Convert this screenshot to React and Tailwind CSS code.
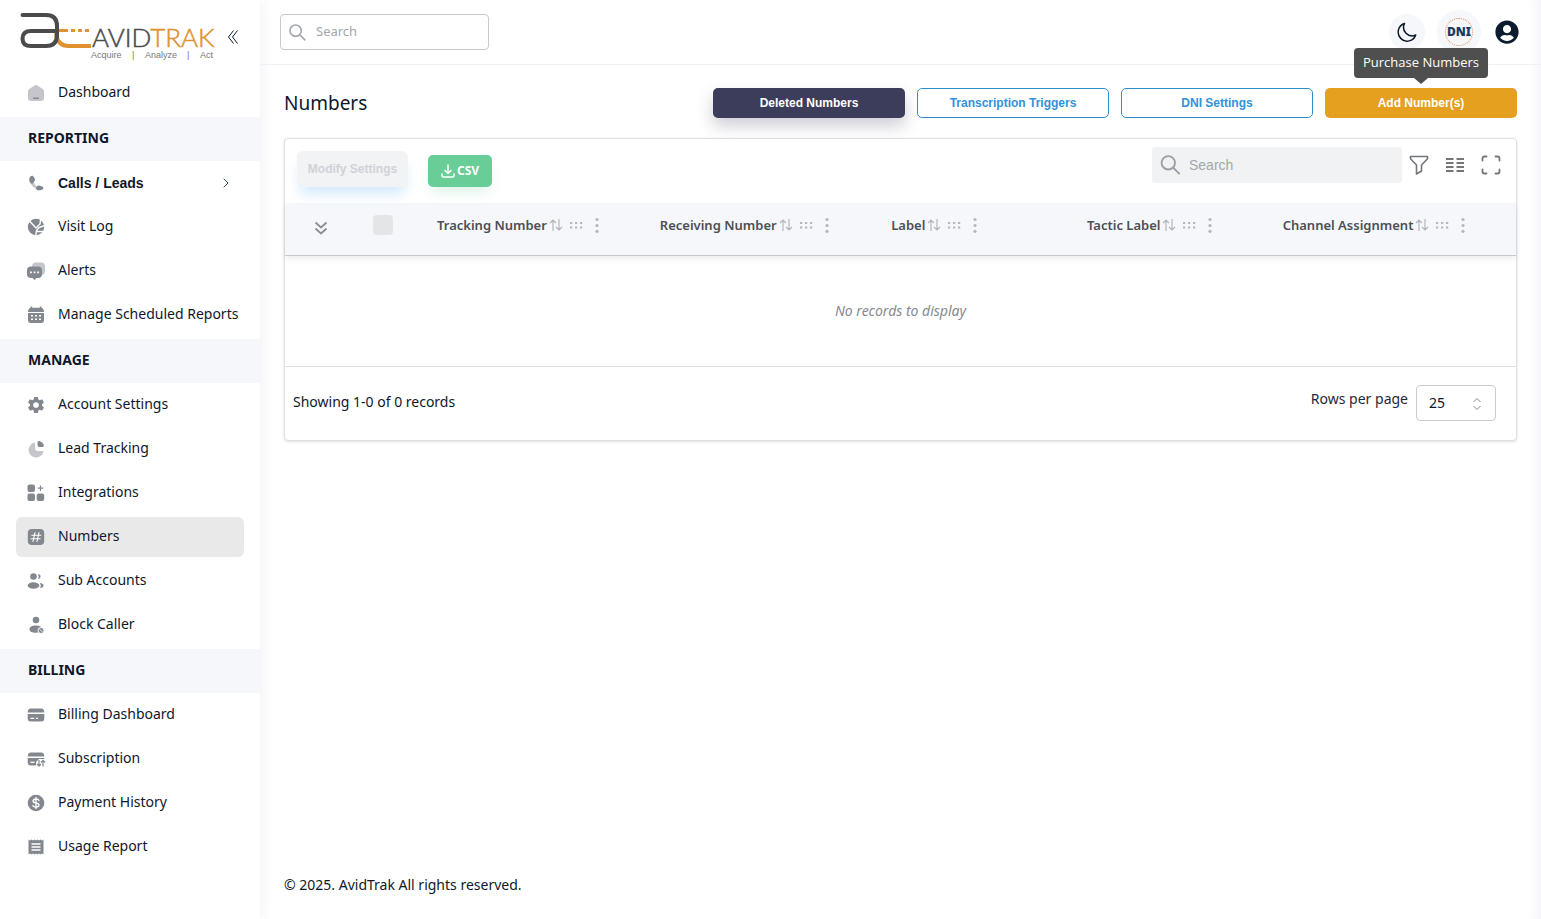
import { useState } from 'react';
import { FaUserCircle } from 'react-icons/fa';
import { IoSettingsSharp } from 'react-icons/io5';
import { ChevronRight } from 'lucide-react';

const Icon = ({ children }) => (
  <svg viewBox="0 0 20 20" className="w-5 h-5 shrink-0" fill="#83888e" aria-hidden="true">
    {children}
  </svg>
);

const icons = {
  dashboard: (
    <Icon>
      <path fill="#c4c6cb" d="M9 2.3 3.3 6.1Q2 7 2 8.6V15a3 3 0 0 0 3 3h10a3 3 0 0 0 3-3V8.6q0-1.6-1.300-2.500L11 2.300q-1-.6-2 0Z" />
      <rect x="7" y="14.500" width="6" height="1.500" rx=".7" />
    </Icon>
  ),
  calls: (
    <Icon>
      <path fill="#c4c6cb" d="m7 8 2.500 4.500L13 14.500l-1.500 2Q5.500 14 4 8.500Z" />
      <path d="M3.300 5.500C3.800 3 6 2.300 7.200 3.300c1.700 1.500 2.300 3.700 1.200 5.200L6 11Q2.700 9 3.300 5.500ZM11 17q-1.800-1-.5-3 1.500-1.700 3.700-1.300 3.300.8 3.300 2.300t-2.300 2q-2.200.4-4.200 0Z" />
    </Icon>
  ),
  visit: (
    <Icon>
      <circle cx="10" cy="10" r="8.200" />
      <path d="M3 3.500 10 11l4-4 .5-4M18.500 8.500 13 10.500l-2.500 3-.8 6M11 14.500l6 0" fill="none" stroke="#fff" strokeWidth="1.400" />
    </Icon>
  ),
  alerts: (
    <Icon>
      <rect x="6" y="1.500" width="13" height="12.500" rx="4" fill="#c4c6cb" />
      <path d="M5 5.500h7a4 4 0 0 1 4 4V13a4 4 0 0 1-4 4h-1.500L8.500 19 6.500 17H5a4 4 0 0 1-4-4V9.500a4 4 0 0 1 4-4Z" />
      <path d="M4 10.500h1.800v1.800H4zM7.600 10.500h1.800v1.800H7.600zM11.200 10.500H13v1.800h-1.800z" fill="#fff" />
    </Icon>
  ),
  calendar: (
    <Icon>
      <path d="M4.500 1.500h1.700v1.300h7.600V1.500h1.700v1.400q2.500.3 2.500 4.100H2q0-3.800 2.500-4.100ZM2 8h16v7a3 3 0 0 1-3 3H5a3 3 0 0 1-3-3Z" />
      <path d="M5 10.800h2M9 10.800h2M13 10.800h2M5 14.200h2M9 14.200h2M13 14.200h2" stroke="#fff" strokeWidth="1.600" />
    </Icon>
  ),
  settings: <IoSettingsSharp className="w-5 h-5 p-px shrink-0 text-[#83888e]" />,
  pie: (
    <Icon>
      <path fill="#c4c6cb" d="M9 3.500A7.500 7.500 0 1 0 17.500 12H12q-3 0-3-3Z" />
      <path d="M11.500 3.500q0-2 2-1.500 3.300 1 4.300 4 .5 2-1.300 2h-3q-2 0-2-2Z" />
    </Icon>
  ),
  integrations: (
    <Icon>
      <rect x="1.500" y="1.500" width="7.500" height="7.500" rx="2" />
      <rect x="1.500" y="10.500" width="7.500" height="7.500" rx="2" />
      <rect x="10.700" y="10.500" width="7.500" height="7.500" rx="2" />
      <path d="M14.500 2.500v5.500M11.700 5.200h5.600" stroke="#83888e" strokeWidth="1.200" />
    </Icon>
  ),
  hash: (
    <Icon>
      <rect x="1.800" y="2" width="16.400" height="16" rx="4" />
      <path d="M9 5.500 7 14.500M13 5.500l-2 9M5.800 8.200h9M5.200 11.800h9" stroke="#fff" strokeWidth="1.100" strokeLinecap="round" />
    </Icon>
  ),
  users: (
    <Icon>
      <circle cx="7.500" cy="5.500" r="3.300" />
      <ellipse cx="7.500" cy="14.500" rx="5.800" ry="3.300" />
      <path d="M12 3q3 .5 2.500 3-.5 2-2.500 2 1.200-2.500 0-5ZM14 12q3.500.5 3.500 2.500T14 17q1.500-2.500 0-5Z" />
    </Icon>
  ),
  block: (
    <Icon>
      <circle cx="10" cy="5" r="3.300" />
      <path d="M10 10.500c4 0 6 1.500 6 3.500 0 2.500-2 3.800-6 3.800s-6.500-1-6.500-3.500 2.500-3.800 6.500-3.800Z" />
      <circle cx="15" cy="15.500" r="3" stroke="#fff" />
      <path d="m13.700 14.200 2.600 2.600" stroke="#fff" strokeWidth=".9" />
    </Icon>
  ),
  card: (
    <Icon>
      <path d="M5 3.500h10q3.300 0 3.300 4H1.700q0-4 3.300-4ZM1.700 9h16.600v4.500a3 3 0 0 1-3 3H4.700a3 3 0 0 1-3-3Z" />
      <path d="M4.500 13.300h3.800M10 13.300h2" stroke="#fff" strokeWidth="1.300" />
    </Icon>
  ),
  subscription: (
    <Icon>
      <path d="M5 3.500h10q3.300 0 3.300 4H1.700q0-4 3.300-4ZM1.700 9h16.600v1H13l-3 3v3.500H4.700a3 3 0 0 1-3-3Z" />
      <path d="M4.500 13.300h4" stroke="#fff" strokeWidth="1.300" />
      <path d="M13 11v6m-2-2 2 2.200L15 15M17 17.500v-6m-2 2 2-2.200 2 2.200" stroke="#83888e" fill="none" strokeWidth="1.200" />
    </Icon>
  ),
  dollar: (
    <Icon>
      <circle cx="10" cy="10" r="8.300" />
      <path d="M13 7.500Q12.500 6 10 6T7 8q0 1.500 3 2t3 2q0 2-3 2t-3-1.500M10 4.500v11" stroke="#fff" strokeWidth="1.300" fill="none" strokeLinecap="round" />
    </Icon>
  ),
  receipt: (
    <Icon>
      <path d="m2.500 2.500 1.500 1 1.500-1 1.500 1 1.500-1 1.500 1 1.500-1 1.500 1 1.500-1 1.500 1 1.500-1v15l-1.500-1-1.500 1-1.500-1-1.500 1-1.500-1-1.500 1-1.500-1-1.500 1-1.500-1-1.500 1Z" />
      <path d="M5.500 7h9M5.500 10h9M5.500 13h9" stroke="#fff" strokeWidth="1.400" />
    </Icon>
  ),
};

const sections = [
  { items: [{ label: 'Dashboard', icon: 'dashboard' }] },
  {
    title: 'REPORTING',
    items: [
      { label: 'Calls / Leads', icon: 'calls', expandable: true },
      { label: 'Visit Log', icon: 'visit' },
      { label: 'Alerts', icon: 'alerts' },
      { label: 'Manage Scheduled Reports', icon: 'calendar' },
    ],
  },
  {
    title: 'MANAGE',
    items: [
      { label: 'Account Settings', icon: 'settings' },
      { label: 'Lead Tracking', icon: 'pie' },
      { label: 'Integrations', icon: 'integrations' },
      { label: 'Numbers', icon: 'hash', active: true },
      { label: 'Sub Accounts', icon: 'users' },
      { label: 'Block Caller', icon: 'block' },
    ],
  },
  {
    title: 'BILLING',
    items: [
      { label: 'Billing Dashboard', icon: 'card' },
      { label: 'Subscription', icon: 'subscription' },
      { label: 'Payment History', icon: 'dollar' },
      { label: 'Usage Report', icon: 'receipt' },
    ],
  },
];

const columns = ['Tracking Number', 'Receiving Number', 'Label', 'Tactic Label', 'Channel Assignment'];

const Logo = () => (
  <svg viewBox="0 0 200 52" className="w-[200px] h-[52px]" role="img" aria-label="AvidTrak">
    <g fill="none" strokeWidth="4">
      <path d="M38 21.500h11M52 21.500h4M59 21.500h4M66 21.500h4" stroke="#e0922f" strokeWidth="3" />
      <path d="M37 24q1 13 13 13h22" stroke="#e0922f" />
      <path d="M3.500 6H27q11 0 11 11v9q0 11-11 11H12q-8.500 0-8.500-7.500T12 22h26" stroke="#4b4b4d" strokeLinecap="round" />
    </g>
    <text x="73" y="38" fontSize="26" fontWeight="300" fontFamily="Lato, sans-serif" fill="#4b4b4d" stroke="#4b4b4d" strokeWidth=".5">
      AVID<tspan fill="#e0922f" stroke="#e0922f">TRAK</tspan>
    </text>
    <g fontSize="9" fontFamily="'Liberation Sans', Arial, sans-serif" fill="#77787b">
      <text x="72" y="49">Acquire</text>
      <text x="113" y="49">|</text>
      <text x="126" y="49">Analyze</text>
      <text x="168" y="49">|</text>
      <text x="181" y="49">Act</text>
    </g>
  </svg>
);

const SearchIcon = ({ className }) => (
  <svg viewBox="0 0 20 20" className={className} fill="none" stroke="currentColor" strokeWidth="1.900" aria-hidden="true">
    <circle cx="7.800" cy="7.800" r="6.700" />
    <path d="m12.500 12.500 6.700 6.700" />
  </svg>
);

const Sidebar = () => (
  <aside className="w-[260px] shrink-0 bg-white shadow-[0_0_14px_rgba(70,70,150,0.09)]">
    <div className="h-[71px] pl-[19px] pt-[9px] flex items-start">
      <Logo />
      <button aria-label="Collapse menu" className="mt-[21px] ml-2 text-slate-900">
        <svg viewBox="0 0 12 14" className="w-3 h-3.5" fill="none" stroke="currentColor">
          <path d="M6.500.500 1.500 7l5 6.500M10.500.500l-5 6.500 5 6.500" />
        </svg>
      </button>
    </div>
    <nav>
      {sections.map((section, i) => (
        <div key={i} className="pb-0.5">
          {section.title && (
            <h2 className="h-11 flex items-center pl-7 pb-0.5 bg-[#f5f7fa] text-sm font-bold text-slate-900">{section.title}</h2>
          )}
          {section.items.map((item) => (
            <div key={item.label} className="px-4 py-0.5">
              <a
                href="#"
                className={`h-10 flex items-center gap-3 px-2.5 rounded-md text-sm text-slate-900 ${item.active ? 'bg-[#e9e9e9]' : 'hover:bg-gray-100'}`}
              >
                {icons[item.icon]}
                <span className={`flex-1 whitespace-nowrap ${item.expandable ? "font-bold font-['Liberation_Sans',Arial,sans-serif]" : 'pb-0.5'}`}>
                  {item.label}
                </span>
                {item.expandable && <ChevronRight className="w-4 h-4 text-slate-700" strokeWidth={1.5} />}
              </a>
            </div>
          ))}
        </div>
      ))}
    </nav>
  </aside>
);

const TopBar = () => (
  <header className="h-[65px] flex items-center justify-between pl-5 pr-[22px] border-b border-[#efeff4]">
    <label className="flex items-center gap-2.5 w-[209px] h-9 px-2 border border-[#c9c9cc] rounded text-[#a3a7ab]">
      <SearchIcon className="w-[17px] h-[17px] shrink-0" />
      <input type="text" placeholder="Search" aria-label="Search" className="w-full text-[13px] outline-none bg-transparent placeholder:text-[#a3a7ab]" />
    </label>
    <div className="flex items-center gap-3">
      <button aria-label="Dark mode" className="w-9 h-9 rounded-full bg-[#f5f7fa] flex items-center justify-center text-slate-900">
        <svg viewBox="0 0 20 20" className="w-5 h-5" fill="none" stroke="currentColor" strokeWidth="1.500" strokeLinejoin="round">
          <path d="M7.500 1.500A9 9 0 1 0 18.700 13 8.500 8.500 0 0 1 7.500 1.500Z" />
        </svg>
      </button>
      <button className="w-11 h-11 rounded-full bg-[#f5f7fa] flex items-center justify-center">
        <span className="w-7 h-7 rounded-full border border-dotted border-[#e28e5c] flex items-center justify-center text-xs font-black text-[#1c3a60]">DNI</span>
      </button>
      <button aria-label="Account" className="ml-0.5 text-[#0d1b2e]">
        <FaUserCircle className="w-6 h-6" />
      </button>
    </div>
  </header>
);

const Actions = () => (
  <div className="flex gap-3 text-xs font-bold font-['Liberation_Sans',Arial,sans-serif]">
    <button className="w-48 h-[30px] rounded-[5px] bg-[#3b3d5b] text-white shadow-[0_8px_16px_rgba(59,61,91,0.25)]">Deleted Numbers</button>
    <button className="w-48 h-[30px] rounded-[5px] border border-[#2f8fc9] bg-white text-[#2f93da]">Transcription Triggers</button>
    <button className="w-48 h-[30px] rounded-[5px] border border-[#2f8fc9] bg-white text-[#2f93da]">DNI Settings</button>
    <div className="relative">
      <button className="w-48 h-[30px] rounded-[5px] bg-[#e6a020] text-white">Add Number(s)</button>
      <div
        role="tooltip"
        className="absolute bottom-10 left-1/2 -translate-x-1/2 h-[30px] px-[9px] flex items-center rounded bg-[#4f4f4f] text-[13px] font-normal whitespace-nowrap text-white font-['Open_Sans',sans-serif]"
      >
        Purchase Numbers
        <span className="absolute top-full left-1/2 -translate-x-1/2 border-x-[7px] border-t-[6px] border-x-transparent border-t-[#4f4f4f]"></span>
      </div>
    </div>
  </div>
);

const ColumnHeader = ({ label }) => (
  <div className="flex items-center whitespace-nowrap text-[#4b5057]">
    <span>{label}</span>
    <button aria-label={`Sort by ${label}`} className="ml-0.5 text-[#b4b6ba]">
      <svg viewBox="0 0 14 14" className="w-3.5 h-3.5" fill="none" stroke="currentColor" strokeWidth="1.200">
        <path d="M4 13V2M1 5l3-3 3 3M10 1v11M7 9l3 3 3-3" />
      </svg>
    </button>
    <button aria-label={`Move ${label}`} className="ml-1.5">
      <svg viewBox="0 0 14 8" className="w-3.5 h-2" fill="#b4b6ba">
        <path d="M1 1h2.200v2H1zM6 1h2.200v2H6zM11 1h2.200v2H11zM1 5.500h2.200v2H1zM6 5.500h2.200v2H6zM11 5.500h2.200v2H11z" />
      </svg>
    </button>
    <button aria-label={`${label} options`} className="ml-3">
      <svg viewBox="0 0 4 16" className="w-1 h-4" fill="#b4b6ba">
        <circle cx="2" cy="2.500" r="1.600" />
        <circle cx="2" cy="8.500" r="1.600" />
        <circle cx="2" cy="14.300" r="1.600" />
      </svg>
    </button>
  </div>
);

const NumbersTable = () => {
  const [pageSize, setPageSize] = useState('25');

  return (
    <section className="mt-5 bg-white border border-[#dfe0e3] rounded shadow-[0_1px_3px_rgba(0,0,0,0.12)]">
      {/* Toolbar */}
      <div className="h-16 flex items-start justify-between pt-2 pl-3 pr-[15px]">
        <div className="flex items-start gap-5 pt-1 font-bold">
          <button disabled className="w-[111px] h-9 rounded-md bg-[#f2f3f5] text-xs text-[#cfd2d6] shadow-[0_10px_14px_-4px_rgba(60,160,240,0.25)] font-['Liberation_Sans',Arial,sans-serif]">
            Modify Settings
          </button>
          <button className="mt-1 w-16 h-8 rounded-[5px] bg-[#68cd96] text-white text-xs flex items-center justify-center gap-0.5 shadow-[0_8px_14px_-4px_rgba(104,205,150,0.25)]">
            <svg viewBox="0 0 14 14" className="w-3.5 h-3.5" fill="none" stroke="currentColor" strokeWidth="1.500" strokeLinecap="round">
              <path d="M7 1v8M4 6.500l3 3 3-3M1 10v1.500q0 1.500 1.500 1.500h9q1.500 0 1.500-1.500V10" />
            </svg>
            CSV
          </button>
        </div>
        <div className="flex items-center text-[#73777c]">
          <label className="w-[250px] h-9 px-2 mr-[7px] flex items-center gap-2 rounded-[3px] bg-[#f1f2f4] text-[#9ca0a5]">
            <SearchIcon className="w-[21px] h-5 shrink-0" />
            <input type="text" placeholder="Search" aria-label="Search numbers" className="w-full text-sm outline-none bg-transparent placeholder:text-[#a3a7ab] font-['Liberation_Sans',Arial,sans-serif]" />
          </label>
          <button aria-label="Filters" className="mr-4">
            <svg viewBox="0 0 20 20" className="w-5 h-5" fill="none" stroke="currentColor" strokeWidth="1.600" strokeLinejoin="round">
              <path d="M1.500 1.500h17v2.200L12.500 10v6l-5 3v-9L1.500 3.700Z" />
            </svg>
          </button>
          <button aria-label="Columns" className="mr-4">
            <svg viewBox="0 0 20 20" className="w-5 h-5" stroke="currentColor" strokeWidth="1.800">
              <path d="M1 4h7.500M11.500 4H19M1 8h7.500M11.500 8H19M1 12h7.500M11.500 12H19M1 16h7.500M11.500 16H19" />
            </svg>
          </button>
          <button aria-label="Full screen">
            <svg viewBox="0 0 20 20" className="w-5 h-5" fill="none" stroke="currentColor" strokeWidth="1.800" strokeLinecap="round">
              <path d="M1.500 5.500v-2q0-2 2-2h2M14.500 1.500h2q2 0 2 2v2M18.500 14.500v2q0 2-2 2h-2M5.500 18.500h-2q-2 0-2-2v-2" />
            </svg>
          </button>
        </div>
      </div>

      <table className="w-full table-fixed text-sm">
        <colgroup>
          <col className="w-[72px]" />
          <col className="w-[52px]" />
          <col className="w-[18.1%]" />
          <col className="w-[18.8%]" />
          <col className="w-[15.9%]" />
          <col className="w-[15.9%]" />
          <col />
        </colgroup>
        <thead>
          <tr className="h-[52px] bg-[#f5f7fa] border-b border-[#c6c9cd] shadow-[0_4px_6px_rgba(0,0,0,0.07)]">
            <th className="text-center">
              <button aria-label="Expand all" className="pt-1 text-[#8b8e93]">
                <svg viewBox="0 0 14 14" className="w-3.5 h-3.5" fill="none" stroke="currentColor" strokeWidth="1.900">
                  <path d="m1.500 1.500 5.500 5 5.500-5M1.500 7.500l5.500 5 5.500-5" />
                </svg>
              </button>
            </th>
            <th className="text-center align-top pt-3">
              <input type="checkbox" disabled aria-label="Select all" className="appearance-none block mx-auto w-5 h-5 rounded bg-[#e4e5e7]" />
            </th>
            {columns.map((label) => (
              <th key={label} className="pl-7 pt-3 align-top text-left text-[13px] leading-5 font-semibold">
                <ColumnHeader label={label} />
              </th>
            ))}
          </tr>
        </thead>
        <tbody>
          <tr className="h-[111px] border-b border-[#dfe0e3]">
            <td colSpan={7} className="text-center italic text-[#868a90]">No records to display</td>
          </tr>
        </tbody>
      </table>

      {/* Pagination */}
      <div className="h-[73px] flex items-start justify-between pl-2 pr-5 pt-[18px] text-sm text-slate-900">
        <span className="pt-[7px]">Showing 1-0 of 0 records</span>
        <div className="flex items-start gap-2">
          <label htmlFor="page-size" className="pt-1 text-slate-800">Rows per page</label>
          <div className="relative">
            <select
              id="page-size"
              value={pageSize}
              onChange={(e) => setPageSize(e.target.value)}
              className="appearance-none w-20 h-9 pl-3 border border-[#c9ccd1] rounded bg-white"
            >
              <option>10</option>
              <option>25</option>
              <option>50</option>
            </select>
            <svg viewBox="0 0 10 14" className="absolute right-3.5 top-3 w-2.5 h-3.5 pointer-events-none" fill="none" stroke="#85898f">
              <path d="m1.500 5 3.500-3.500L8.500 5M1.500 9 5 12.500 8.500 9" />
            </svg>
          </div>
        </div>
      </div>
    </section>
  );
};

const App = () => (
  <div className="min-h-screen flex bg-white font-['Noto_Sans',sans-serif]">
    <Sidebar />
    <div className="flex-1 min-w-0 flex flex-col shadow-[inset_-12px_0_12px_-8px_rgba(70,70,150,0.06)]">
      <TopBar />
      <main className="flex-1 px-6 pt-[23px]">
        <div className="flex items-center justify-between">
          <h1 className="text-[19px] leading-7 text-slate-900">Numbers</h1>
          <Actions />
        </div>
        <NumbersTable />
      </main>
      <footer className="px-6 pb-6 text-sm text-slate-900">© 2025. AvidTrak All rights reserved.</footer>
    </div>
  </div>
);

export default App;
